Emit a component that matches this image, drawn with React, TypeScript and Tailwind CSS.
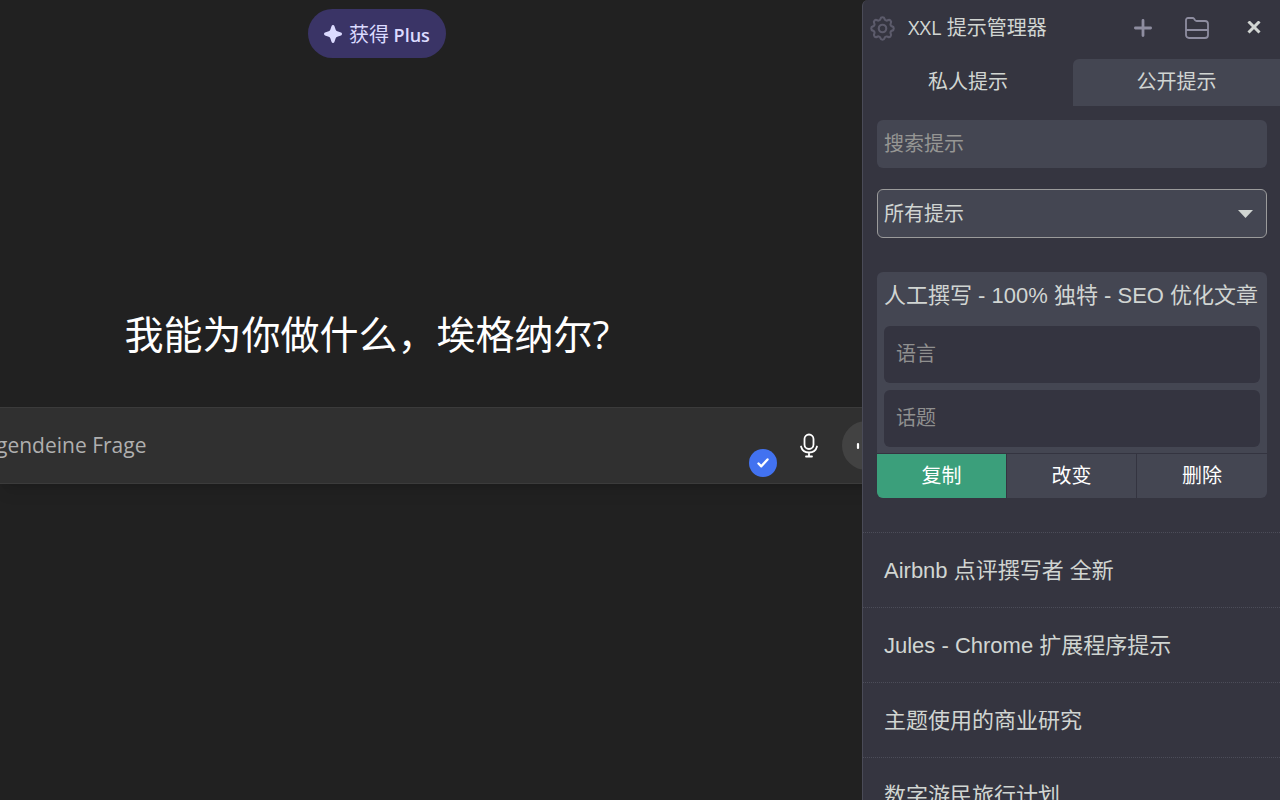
import type { ReactNode } from "react";

const prompts = [
  "Airbnb 点评撰写者 全新",
  "Jules - Chrome 扩展程序提示",
  "主题使用的商业研究",
  "数字游民旅行计划",
];

function IconButton({ label, className, children }: { label: string; className?: string; children: ReactNode }) {
  return (
    <button type="button" aria-label={label} className={`flex items-center justify-center ${className ?? ""}`}>
      {children}
    </button>
  );
}

function ChatArea() {
  return (
    <main className="flex min-w-0 flex-1 flex-col overflow-hidden font-['Open_Sans','Noto_Sans_CJK_SC',sans-serif]">
      <header className="flex h-[58px] items-end justify-center pr-[108px]">
        <button
          type="button"
          className="flex h-[49px] items-center gap-[7px] rounded-full bg-[#3a3466] px-4 text-[20px] text-[#dcdbff]"
        >
          <svg className="size-[18px]" viewBox="0 0 18 18" fill="currentColor" aria-hidden="true">
            <path d="M9 0c.7 0 1.200.4 1.400 1l1.300 3.700c.3.800.8 1.300 1.600 1.600L17 7.600c.6.2 1 .8 1 1.400s-.4 1.200-1 1.400l-3.700 1.300c-.8.3-1.300.8-1.600 1.600L10.400 17c-.2.6-.7 1-1.400 1s-1.200-.4-1.400-1l-1.300-3.700c-.3-.8-.8-1.300-1.600-1.600L1 10.400c-.6-.2-1-.8-1-1.400s.4-1.200 1-1.400l3.700-1.300c.8-.3 1.300-.8 1.600-1.600L7.600 1C7.800.4 8.300 0 9 0Z" />
          </svg>
          <span className="font-['Noto_Sans_CJK_SC',sans-serif]">
            获得 <span className="font-['Open_Sans',sans-serif] text-[18px] font-semibold">Plus</span>
          </span>
        </button>
      </header>

      <h1 className="mt-[246px] pr-[128px] text-center font-['Open_Sans','Noto_Sans_CJK_SC',sans-serif] text-[39px] leading-[60px] text-white">
        我能为你做什么，埃格纳尔?
      </h1>

      <form
        className="-mr-8 mt-[43px] flex h-[77px] items-center border-y border-[#3b3b3b] bg-[#303030] pr-[3px] shadow-lg"
        onSubmit={(e) => e.preventDefault()}
      >
        <div className="relative flex h-full flex-1 items-center">
          <input
            type="text"
            aria-label="Frage"
            placeholder="gendeine Frage"
            className="-ml-1 w-full bg-transparent text-[21px] text-white outline-none placeholder:text-[#afafaf]"
          />
          <span className="absolute right-[14px] bottom-[6px] flex size-7 items-center justify-center rounded-full bg-[#4272f0]">
            <svg className="size-[12px]" viewBox="0 0 12 12" fill="none" stroke="white" strokeWidth="2.4" strokeLinecap="round" strokeLinejoin="round" aria-hidden="true">
              <path d="M1.500 6.500 4.300 9.300 10.500 2.500" />
            </svg>
          </span>
        </div>
        <IconButton label="Diktieren" className="mr-[15px] h-9 w-9 text-white">
          <svg className="h-[26px] w-[20px]" viewBox="0 0 20 26" fill="none" stroke="currentColor" strokeWidth="1.800" strokeLinecap="round" aria-hidden="true">
            <rect x="5.500" y="1.500" width="9" height="14.500" rx="4.500" />
            <path d="M2 13.500c1 3.800 4.200 6 8 6s7-2.200 8-6M10 19.500V23.500M7 23.500h6" />
          </svg>
        </IconButton>
        <IconButton label="Sprachmodus" className="size-[49px] rounded-full bg-[#424242] text-white">
          <svg className="size-[24px]" viewBox="0 0 24 24" fill="none" stroke="currentColor" strokeWidth="2.200" strokeLinecap="round" aria-hidden="true">
            <path d="M3 10v4M9 5v14M15 7.500v9M21 10v4" />
          </svg>
        </IconButton>
      </form>
    </main>
  );
}

function PromptCard() {
  return (
    <section className="mt-[34px] mr-[13px] ml-[14px] overflow-hidden rounded-md bg-[#444652]">
      <h2 className="px-[7px] pt-[7px] text-[22px] leading-[34px] whitespace-nowrap">
        人工撰写 - 100% 独特 - SEO 优化文章
      </h2>
      <div className="flex flex-col gap-[7px] px-[7px] pt-[13px] pb-[6px]">
        <input
          type="text"
          aria-label="语言"
          placeholder="语言"
          className="h-[57px] rounded-md bg-[#343440] px-3 text-[20px] outline-none placeholder:text-[#8f8f8f]"
        />
        <input
          type="text"
          aria-label="话题"
          placeholder="话题"
          className="h-[57px] rounded-md bg-[#343440] px-3 text-[20px] outline-none placeholder:text-[#8f8f8f]"
        />
      </div>
      <div className="grid h-[45px] grid-cols-3 divide-x divide-[#343440] border-t border-[#343440] text-[20px] text-white">
        <button type="button" className="bg-[#3b9f7b]">复制</button>
        <button type="button">改变</button>
        <button type="button">删除</button>
      </div>
    </section>
  );
}

function PromptPanel() {
  return (
    <aside className="w-[418px] shrink-0 overflow-hidden rounded-tl-md border-l border-[#4a4b57] bg-[#353540] font-['Liberation_Sans','Noto_Sans_CJK_SC',sans-serif] text-[#d1d5d2]">
      <header className="flex h-[59px] items-center pr-[19px] pb-[3px] pl-[7px]">
        <IconButton label="设置" className="text-[#5c5b6b]">
          <svg className="size-[25px]" viewBox="2 2 20 20" fill="none" stroke="currentColor" strokeWidth="1.700" strokeLinecap="round" strokeLinejoin="round" aria-hidden="true">
            <path d="M10.325 4.317c.426-1.756 2.924-1.756 3.350 0a1.724 1.724 0 0 0 2.573 1.066c1.543-.94 3.310.826 2.370 2.370a1.724 1.724 0 0 0 1.065 2.572c1.756.426 1.756 2.924 0 3.350a1.724 1.724 0 0 0-1.066 2.573c.94 1.543-.826 3.310-2.370 2.370a1.724 1.724 0 0 0-2.572 1.065c-.426 1.756-2.924 1.756-3.350 0a1.724 1.724 0 0 0-2.573-1.066c-1.543.94-3.310-.826-2.370-2.370a1.724 1.724 0 0 0-1.065-2.572c-1.756-.426-1.756-2.924 0-3.350a1.724 1.724 0 0 0 1.066-2.573c-.94-1.543.826-3.310 2.370-2.370.996.608 2.296.07 2.572-1.065Z" />
            <circle cx="12" cy="12" r="3" />
          </svg>
        </IconButton>
        <h1 className="ml-[13px] flex-1 font-['Open_Sans','Noto_Sans_CJK_SC',sans-serif] text-[20px]">XXL 提示管理器</h1>
        <IconButton label="新建" className="mr-[32px] text-[#8e8da0]">
          <svg className="size-[20px]" viewBox="0 0 20 20" fill="none" stroke="currentColor" strokeWidth="2.800" strokeLinecap="round" aria-hidden="true">
            <path d="M10 2.400v15.200M2.400 10h15.200" />
          </svg>
        </IconButton>
        <IconButton label="文件夹" className="mr-[38px] text-[#8e8da0]">
          <svg className="h-[22px] w-[24px]" viewBox="0 0 24 22" fill="none" stroke="currentColor" strokeWidth="1.800" strokeLinejoin="round" aria-hidden="true">
            <path d="M1 3a2 2 0 0 1 2-2h4.500a2 2 0 0 1 1.600.8l1 1.400a2 2 0 0 0 1.600.8H20a3 3 0 0 1 3 3V18a3 3 0 0 1-3 3H4a3 3 0 0 1-3-3ZM1 13h22" />
          </svg>
        </IconButton>
        <IconButton label="关闭">
          <svg className="size-[14px]" viewBox="0 0 14 14" fill="none" stroke="currentColor" strokeWidth="3" aria-hidden="true">
            <path d="m1.500 .5 11 11M12.500 .5l-11 11" />
          </svg>
        </IconButton>
      </header>

      <nav className="grid h-[47px] grid-cols-[210px_1fr] text-[20px]">
        <button type="button" className="pb-[2px]">私人提示</button>
        <button type="button" className="rounded-tl-md bg-[#444652] pb-[2px]">公开提示</button>
      </nav>

      <div className="flex flex-col gap-[21px] pt-[14px] pr-[13px] pl-[14px]">
        <input
          type="search"
          aria-label="搜索提示"
          placeholder="搜索提示"
          className="h-[48px] w-full rounded-md bg-[#444652] px-[7px] text-[20px] outline-none placeholder:text-[#969694]"
        />
        <div className="relative">
          <select
            aria-label="所有提示"
            className="h-[49px] w-full appearance-none rounded-md border border-[#9b9b9b] bg-[#444652] px-[6px] text-[20px] outline-none"
          >
            <option>所有提示</option>
          </select>
          <svg className="pointer-events-none absolute top-[21px] right-[14px] h-[8px] w-[15px]" viewBox="0 0 15 8" fill="currentColor" aria-hidden="true">
            <path d="M0 0h15L7.500 8Z" />
          </svg>
        </div>
      </div>

      <PromptCard />

      <ul className="mt-[34px]">
        {prompts.map((title) => (
          <li key={title} className="flex h-[75px] items-center border-t border-dotted border-[#4c4d59] px-[21px] text-[22px]">
            {title}
          </li>
        ))}
      </ul>
    </aside>
  );
}

export default function App() {
  return (
    <div className="flex h-screen overflow-hidden bg-[#212121]">
      <ChatArea />
      <PromptPanel />
    </div>
  );
}
